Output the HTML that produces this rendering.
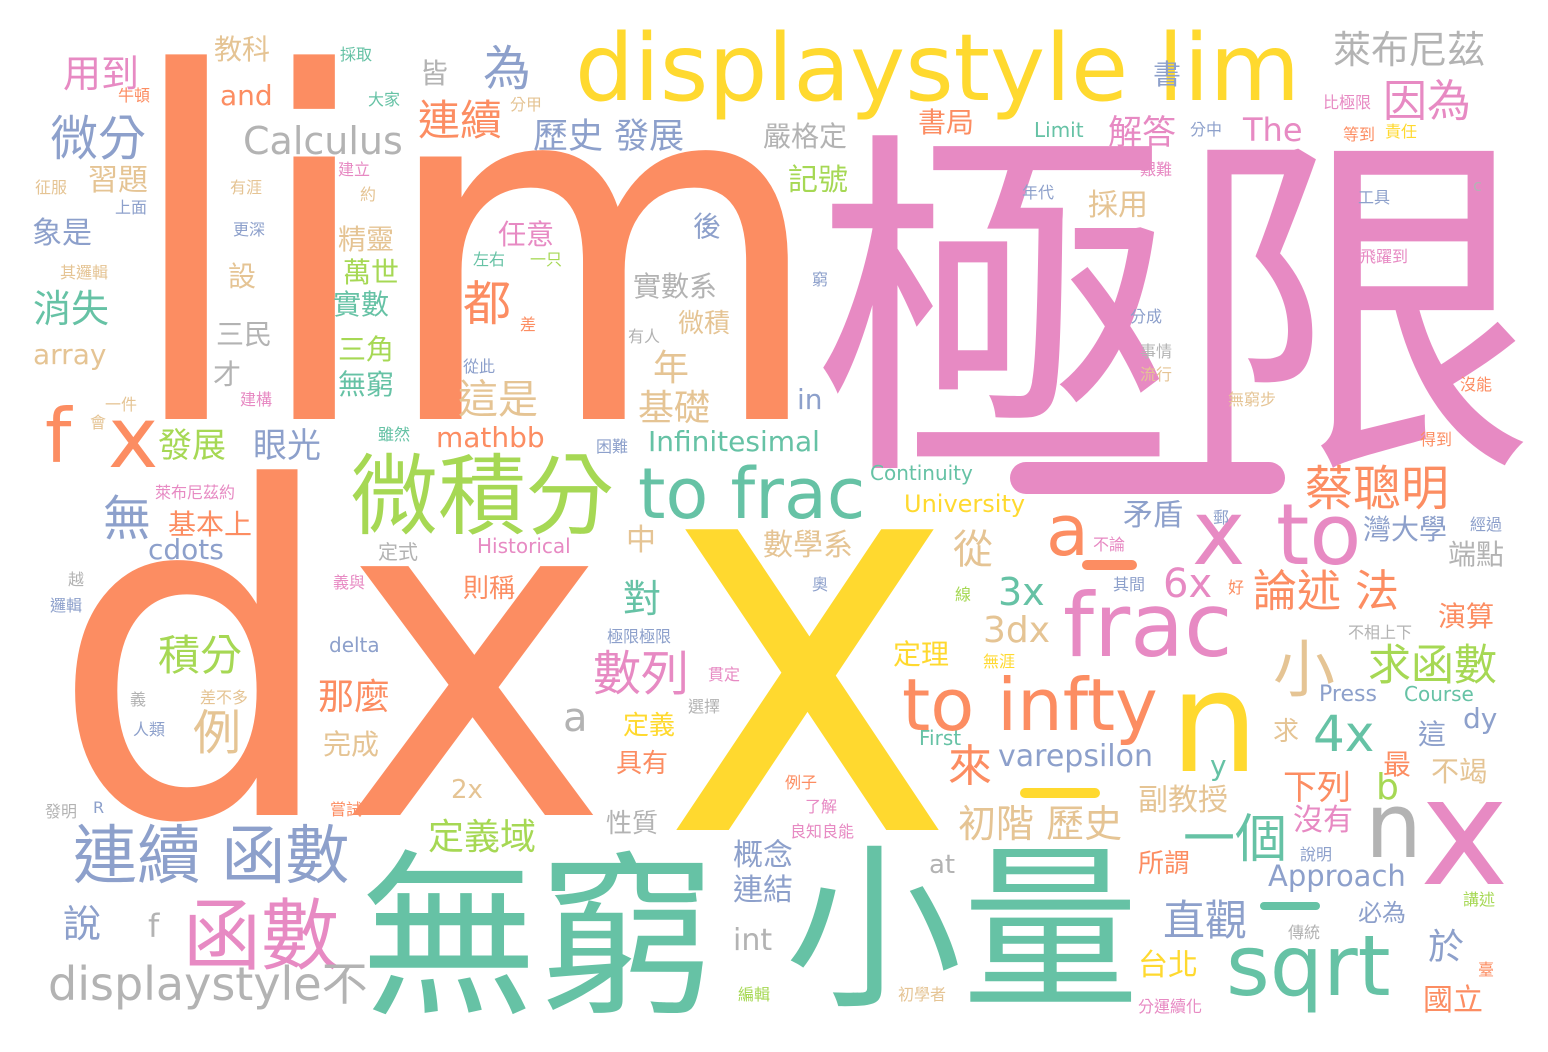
<!DOCTYPE html>
<html><head><meta charset="utf-8">
<style>
html,body{margin:0;padding:0;background:#fff;}
body{width:1548px;height:1052px;position:relative;overflow:hidden;font-family:"DejaVu Sans","Noto Sans CJK TC",sans-serif;}
.w{position:absolute;white-space:nowrap;line-height:1;transform-origin:0 0;}
.o{color:#fc8d62}.p{color:#e78ac3}.y{color:#ffd92f}.t{color:#66c2a5}.b{color:#8da0cb}.g{color:#a6d854}.n{color:#e5c494}.r{color:#b3b3b3}
.bar{position:absolute;border-radius:20px;}
</style></head><body>
<div class="w o" style="font-size:480px;left:122px;top:14px;transform:scaleX(0.96)">lim</div>
<div class="w o" style="font-size:455px;left:50px;top:431px">dx</div>
<div class="w y" style="font-size:550px;left:662px;top:365px;transform:scaleX(0.9)">x</div>
<div class="w p" style="font-size:362px;left:812px;top:134px">極限</div>
<div class="bar" style="background:#e78ac3;left:1010px;top:462px;width:275px;height:32px"></div>
<div class="w y" style="font-size:93px;left:575px;top:22px">displaystyle lim</div>
<div class="w t" style="font-size:178px;left:360px;top:850px">無窮</div>
<div class="w t" style="font-size:177px;left:785px;top:843px">小量</div>
<div class="w g" style="font-size:88px;left:350px;top:453px">微積分</div>
<div class="w t" style="font-size:70px;left:638px;top:459px">to frac</div>
<div class="w p" style="font-size:88px;left:1063px;top:582px">frac</div>
<div class="w o" style="font-size:72px;left:902px;top:669px">to infty</div>
<div class="w t" style="font-size:84px;left:1226px;top:924px">sqrt</div>
<div class="w y" style="font-size:140px;left:1170px;top:654px">n</div>
<div class="w p" style="font-size:150px;left:1420px;top:758px">x</div>
<div class="w r" style="font-size:90px;left:1365px;top:782px">n</div>
<div class="w p" style="font-size:90px;left:1192px;top:489px">x</div>
<div class="w p" style="font-size:85px;left:1276px;top:493px">to</div>
<div class="w o" style="font-size:70px;left:1046px;top:496px">a</div>
<div class="bar" style="background:#fc8d62;left:1082px;top:560px;width:55px;height:10px"></div>
<div class="bar" style="background:#ffd92f;left:1020px;top:788px;width:80px;height:10px"></div>
<div class="bar" style="background:#66c2a5;left:1260px;top:902px;width:60px;height:8px"></div>
<div class="w p" style="font-size:78px;left:183px;top:898px">函數</div>
<div class="w b" style="font-size:64px;left:73px;top:825px">連續 函數</div>
<div class="w r" style="font-size:46px;left:48px;top:961px">displaystyle不</div>
<div class="w o" style="font-size:75px;left:45px;top:399px">f</div>
<div class="w o" style="font-size:85px;left:108px;top:396px">x</div>
<div class="w r" style="font-size:38px;left:243px;top:122px">Calculus</div>
<div class="w b" style="font-size:48px;left:50px;top:115px">微分</div>
<div class="w r" style="font-size:38px;left:1333px;top:31px">萊布尼茲</div>
<div class="w p" style="font-size:44px;left:1383px;top:80px">因為</div>
<div class="w p" style="font-size:34px;left:1108px;top:116px">解答</div>
<div class="w p" style="font-size:32px;left:1243px;top:114px">The</div>
<div class="w o" style="font-size:48px;left:1305px;top:465px">蔡聰明</div>
<div class="w o" style="font-size:44px;left:1253px;top:570px">論述 法</div>
<div class="w g" style="font-size:43px;left:1368px;top:645px">求函數</div>
<div class="w p" style="font-size:48px;left:593px;top:650px">數列</div>
<div class="w n" style="font-size:62px;left:1273px;top:639px">小</div>
<div class="w t" style="font-size:50px;left:1313px;top:709px">4x</div>
<div class="w t" style="font-size:52px;left:1183px;top:814px">一個</div>
<div class="w b" style="font-size:42px;left:1163px;top:900px">直觀</div>
<div class="w p" style="font-size:40px;left:1163px;top:564px">6x</div>
<div class="w t" style="font-size:38px;left:998px;top:573px">3x</div>
<div class="w n" style="font-size:36px;left:983px;top:613px">3dx</div>
<div class="w b" style="font-size:29px;left:1268px;top:862px">Approach</div>
<div class="w b" style="font-size:30px;left:998px;top:742px">varepsilon</div>
<div class="w t" style="font-size:28px;left:648px;top:428px">Infinitesimal</div>
<div class="w o" style="font-size:28px;left:436px;top:424px">mathbb</div>
<div class="w o" style="font-size:42px;left:418px;top:100px">連續</div>
<div class="w b" style="font-size:35px;left:533px;top:120px">歷史 發展</div>
<div class="w b" style="font-size:48px;left:483px;top:45px">為</div>
<div class="w r" style="font-size:28px;left:420px;top:60px">皆</div>
<div class="w p" style="font-size:38px;left:63px;top:55px">用到</div>
<div class="w o" style="font-size:28px;left:220px;top:82px">and</div>
<div class="w n" style="font-size:28px;left:214px;top:36px">教科</div>
<div class="w t" style="font-size:38px;left:33px;top:290px">消失</div>
<div class="w b" style="font-size:30px;left:32px;top:219px">象是</div>
<div class="w n" style="font-size:30px;left:88px;top:166px">習題</div>
<div class="w n" style="font-size:28px;left:33px;top:341px">array</div>
<div class="w o" style="font-size:48px;left:463px;top:280px">都</div>
<div class="w n" style="font-size:40px;left:458px;top:380px">這是</div>
<div class="w n" style="font-size:36px;left:653px;top:351px">年</div>
<div class="w n" style="font-size:36px;left:638px;top:391px">基礎</div>
<div class="w g" style="font-size:34px;left:158px;top:429px">發展</div>
<div class="w b" style="font-size:34px;left:253px;top:429px">眼光</div>
<div class="w b" style="font-size:48px;left:103px;top:495px">無</div>
<div class="w o" style="font-size:28px;left:168px;top:511px">基本上</div>
<div class="w b" style="font-size:28px;left:148px;top:536px">cdots</div>
<div class="w g" style="font-size:42px;left:158px;top:635px">積分</div>
<div class="w n" style="font-size:48px;left:193px;top:709px">例</div>
<div class="w o" style="font-size:36px;left:318px;top:680px">那麼</div>
<div class="w n" style="font-size:28px;left:323px;top:731px">完成</div>
<div class="w r" style="font-size:40px;left:563px;top:698px">a</div>
<div class="w t" style="font-size:38px;left:623px;top:580px">對</div>
<div class="w n" style="font-size:30px;left:626px;top:526px">中</div>
<div class="w n" style="font-size:30px;left:763px;top:531px">數學系</div>
<div class="w g" style="font-size:36px;left:428px;top:820px">定義域</div>
<div class="w b" style="font-size:30px;left:733px;top:841px">概念</div>
<div class="w b" style="font-size:30px;left:733px;top:876px">連結</div>
<div class="w r" style="font-size:30px;left:733px;top:926px">int</div>
<div class="w n" style="font-size:38px;left:958px;top:805px">初階 歷史</div>
<div class="w n" style="font-size:30px;left:1138px;top:786px">副教授</div>
<div class="w o" style="font-size:44px;left:948px;top:745px">來</div>
<div class="w n" style="font-size:40px;left:953px;top:530px">從</div>
<div class="w b" style="font-size:30px;left:1123px;top:501px">矛盾</div>
<div class="w y" style="font-size:30px;left:1138px;top:951px">台北</div>
<div class="w o" style="font-size:30px;left:1423px;top:986px">國立</div>
<div class="w b" style="font-size:36px;left:1428px;top:930px">於</div>
<div class="w g" style="font-size:36px;left:1376px;top:770px">b</div>
<div class="w o" style="font-size:34px;left:1283px;top:771px">下列</div>
<div class="w p" style="font-size:30px;left:1293px;top:806px">沒有</div>
<div class="w b" style="font-size:38px;left:63px;top:905px">說</div>
<div class="w r" style="font-size:32px;left:148px;top:910px">f</div>
<div class="w n" style="font-size:28px;left:338px;top:226px">精靈</div>
<div class="w g" style="font-size:28px;left:343px;top:259px">萬世</div>
<div class="w t" style="font-size:28px;left:333px;top:291px">實數</div>
<div class="w g" style="font-size:28px;left:338px;top:336px">三角</div>
<div class="w t" style="font-size:28px;left:338px;top:371px">無窮</div>
<div class="w g" style="font-size:30px;left:788px;top:166px">記號</div>
<div class="w n" style="font-size:30px;left:1088px;top:191px">採用</div>
<div class="w o" style="font-size:28px;left:918px;top:109px">書局</div>
<div class="w r" style="font-size:28px;left:763px;top:123px">嚴格定</div>
<div class="w b" style="font-size:28px;left:1153px;top:61px">書</div>
<div class="w r" style="font-size:28px;left:633px;top:273px">實數系</div>
<div class="w n" style="font-size:26px;left:678px;top:311px">微積</div>
<div class="w b" style="font-size:28px;left:693px;top:213px">後</div>
<div class="w p" style="font-size:28px;left:498px;top:221px">任意</div>
<div class="w n" style="font-size:28px;left:228px;top:263px">設</div>
<div class="w r" style="font-size:28px;left:216px;top:321px">三民</div>
<div class="w r" style="font-size:28px;left:213px;top:361px">才</div>
<div class="w b" style="font-size:28px;left:797px;top:386px">in</div>
<div class="w t" style="font-size:20px;left:870px;top:463px">Continuity</div>
<div class="w y" style="font-size:24px;left:904px;top:492px">University</div>
<div class="w p" style="font-size:20px;left:477px;top:536px">Historical</div>
<div class="w b" style="font-size:20px;left:329px;top:635px">delta</div>
<div class="w y" style="font-size:28px;left:893px;top:641px">定理</div>
<div class="w y" style="font-size:26px;left:623px;top:713px">定義</div>
<div class="w o" style="font-size:26px;left:616px;top:751px">具有</div>
<div class="w n" style="font-size:26px;left:451px;top:777px">2x</div>
<div class="w r" style="font-size:26px;left:606px;top:811px">性質</div>
<div class="w b" style="font-size:22px;left:1319px;top:684px">Press</div>
<div class="w t" style="font-size:20px;left:1404px;top:684px">Course</div>
<div class="w b" style="font-size:28px;left:1463px;top:705px">dy</div>
<div class="w t" style="font-size:20px;left:919px;top:728px">First</div>
<div class="w r" style="font-size:26px;left:929px;top:852px">at</div>
<div class="w t" style="font-size:28px;left:1210px;top:752px">y</div>
<div class="w b" style="font-size:28px;left:1418px;top:721px">這</div>
<div class="w o" style="font-size:28px;left:1383px;top:751px">最</div>
<div class="w n" style="font-size:28px;left:1431px;top:758px">不竭</div>
<div class="w n" style="font-size:26px;left:1273px;top:719px">求</div>
<div class="w o" style="font-size:28px;left:1438px;top:603px">演算</div>
<div class="w b" style="font-size:28px;left:1363px;top:516px">灣大學</div>
<div class="w r" style="font-size:28px;left:1448px;top:541px">端點</div>
<div class="w o" style="font-size:26px;left:1138px;top:851px">所謂</div>
<div class="w b" style="font-size:24px;left:1358px;top:901px">必為</div>
<div class="w t" style="font-size:20px;left:1034px;top:120px">Limit</div>
<div class="w o" style="font-size:16px;left:118px;top:88px">牛頓</div>
<div class="w t" style="font-size:16px;left:340px;top:47px">採取</div>
<div class="w t" style="font-size:16px;left:368px;top:92px">大家</div>
<div class="w n" style="font-size:16px;left:510px;top:97px">分甲</div>
<div class="w p" style="font-size:16px;left:338px;top:162px">建立</div>
<div class="w n" style="font-size:16px;left:360px;top:187px">約</div>
<div class="w n" style="font-size:16px;left:35px;top:180px">征服</div>
<div class="w n" style="font-size:16px;left:230px;top:180px">有涯</div>
<div class="w b" style="font-size:16px;left:115px;top:200px">上面</div>
<div class="w b" style="font-size:16px;left:233px;top:222px">更深</div>
<div class="w n" style="font-size:16px;left:60px;top:265px">其邏輯</div>
<div class="w t" style="font-size:16px;left:473px;top:252px">左右</div>
<div class="w g" style="font-size:16px;left:530px;top:252px">一只</div>
<div class="w o" style="font-size:16px;left:520px;top:317px">差</div>
<div class="w r" style="font-size:16px;left:628px;top:329px">有人</div>
<div class="w b" style="font-size:16px;left:463px;top:359px">從此</div>
<div class="w b" style="font-size:16px;left:812px;top:272px">窮</div>
<div class="w n" style="font-size:16px;left:105px;top:397px">一件</div>
<div class="w n" style="font-size:16px;left:90px;top:415px">會</div>
<div class="w p" style="font-size:16px;left:240px;top:392px">建構</div>
<div class="w t" style="font-size:16px;left:378px;top:427px">雖然</div>
<div class="w b" style="font-size:16px;left:596px;top:439px">困難</div>
<div class="w p" style="font-size:16px;left:155px;top:485px">萊布尼茲約</div>
<div class="w r" style="font-size:20px;left:378px;top:542px">定式</div>
<div class="w r" style="font-size:16px;left:68px;top:572px">越</div>
<div class="w b" style="font-size:16px;left:50px;top:598px">邏輯</div>
<div class="w p" style="font-size:16px;left:333px;top:575px">義與</div>
<div class="w o" style="font-size:26px;left:463px;top:576px">則稱</div>
<div class="w b" style="font-size:16px;left:607px;top:629px">極限極限</div>
<div class="w r" style="font-size:16px;left:130px;top:692px">義</div>
<div class="w n" style="font-size:16px;left:200px;top:690px">差不多</div>
<div class="w b" style="font-size:16px;left:133px;top:722px">人類</div>
<div class="w p" style="font-size:16px;left:708px;top:667px">貫定</div>
<div class="w r" style="font-size:16px;left:688px;top:699px">選擇</div>
<div class="w r" style="font-size:16px;left:45px;top:804px">發明</div>
<div class="w b" style="font-size:16px;left:93px;top:800px">R</div>
<div class="w o" style="font-size:16px;left:330px;top:802px">嘗試</div>
<div class="w o" style="font-size:16px;left:785px;top:775px">例子</div>
<div class="w p" style="font-size:16px;left:805px;top:799px">了解</div>
<div class="w p" style="font-size:16px;left:790px;top:824px">良知良能</div>
<div class="w b" style="font-size:16px;left:812px;top:577px">奧</div>
<div class="w g" style="font-size:16px;left:955px;top:587px">線</div>
<div class="w y" style="font-size:16px;left:983px;top:654px">無涯</div>
<div class="w p" style="font-size:16px;left:1093px;top:537px">不論</div>
<div class="w b" style="font-size:16px;left:1113px;top:577px">其間</div>
<div class="w o" style="font-size:16px;left:1228px;top:580px">好</div>
<div class="w b" style="font-size:16px;left:1213px;top:510px">郵</div>
<div class="w r" style="font-size:16px;left:1348px;top:625px">不相上下</div>
<div class="w b" style="font-size:16px;left:1300px;top:847px">說明</div>
<div class="w r" style="font-size:16px;left:1288px;top:925px">傳統</div>
<div class="w g" style="font-size:16px;left:738px;top:987px">編輯</div>
<div class="w n" style="font-size:16px;left:898px;top:987px">初學者</div>
<div class="w p" style="font-size:16px;left:1138px;top:999px">分運續化</div>
<div class="w o" style="font-size:16px;left:1478px;top:962px">臺</div>
<div class="w g" style="font-size:16px;left:1463px;top:892px">講述</div>
<div class="w b" style="font-size:16px;left:1470px;top:517px">經過</div>
<div class="w o" style="font-size:16px;left:1420px;top:432px">得到</div>
<div class="w o" style="font-size:16px;left:1460px;top:377px">沒能</div>
<div class="w n" style="font-size:16px;left:1228px;top:392px">無窮步</div>
<div class="w r" style="font-size:16px;left:1140px;top:344px">事情</div>
<div class="w n" style="font-size:16px;left:1140px;top:367px">流行</div>
<div class="w b" style="font-size:16px;left:1130px;top:309px">分成</div>
<div class="w p" style="font-size:16px;left:1360px;top:249px">飛躍到</div>
<div class="w b" style="font-size:16px;left:1358px;top:190px">工具</div>
<div class="w r" style="font-size:16px;left:1473px;top:178px">c</div>
<div class="w p" style="font-size:16px;left:1140px;top:162px">艱難</div>
<div class="w o" style="font-size:16px;left:1343px;top:127px">等到</div>
<div class="w y" style="font-size:16px;left:1385px;top:124px">責任</div>
<div class="w p" style="font-size:16px;left:1323px;top:95px">比極限</div>
<div class="w b" style="font-size:16px;left:1190px;top:122px">分中</div>
<div class="w b" style="font-size:16px;left:1022px;top:185px">年代</div>
</body></html>
